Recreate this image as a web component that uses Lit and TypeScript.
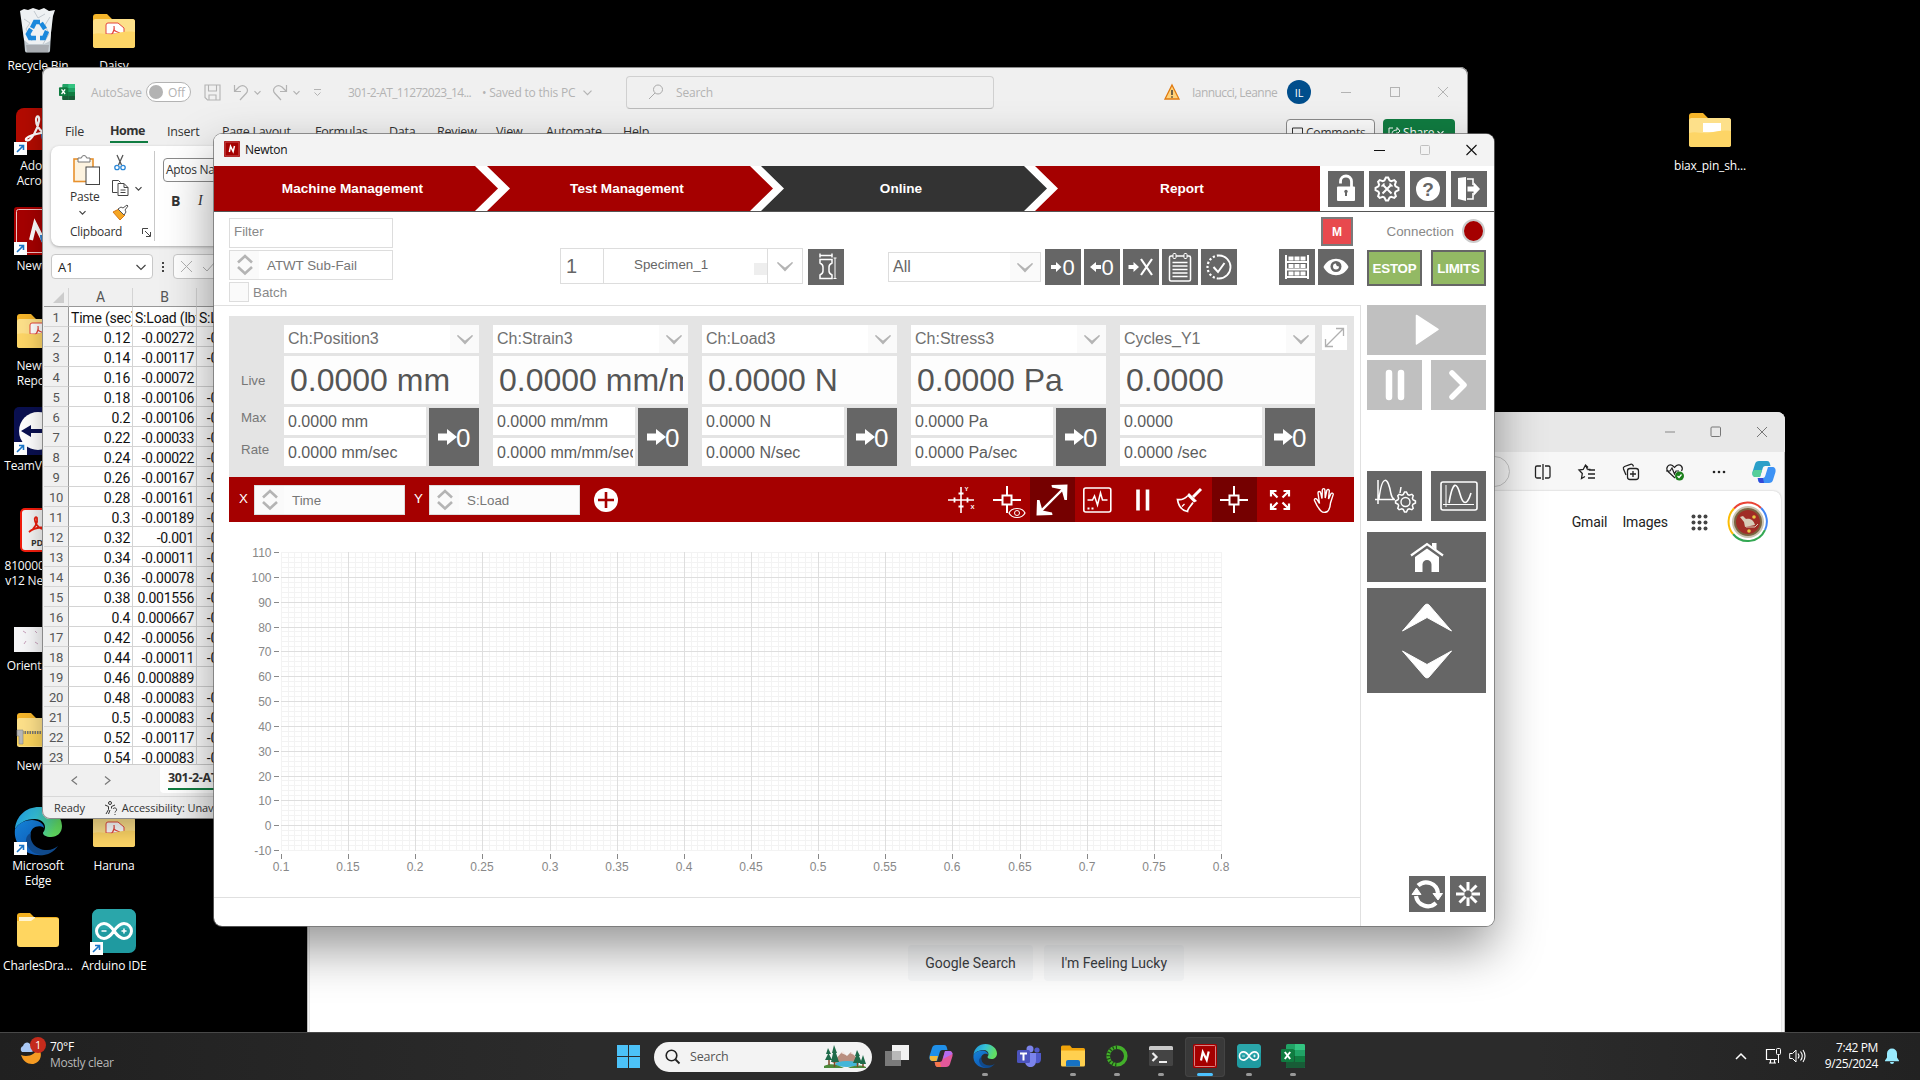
import { LitElement, html, css, svg } from "lit";
import { customElement } from "lit/decorators.js";

/* ---------- shared helpers ---------- */

const ic = (w: number, h: number, body: unknown, box = `0 0 ${w} ${h}`) =>
  html`<svg class="ic" width=${w} height=${h} viewBox=${box} fill="none">${body}</svg>`;

const range = (n: number) => Array.from({ length: n }, (_, i) => i);

const base = css`
  * { box-sizing: border-box; }
  :host { display: block; font-family: "Open Sans", "Noto Sans", sans-serif; font-size: 12px; letter-spacing: -0.2px; }
  .ic { display: block; flex: none; overflow: visible; }
`;

/* ---------- multi-use artwork ---------- */

const excelArt = svg`
  <rect x="5" y="0" width="19" height="24" rx="1.5" fill="#21a366"/>
  <path d="M14 0h8.5a1.5 1.5 0 0 1 1.500 1.500V6H14z" fill="#33c481"/>
  <path d="M5 6h9v6H5z" fill="#107c41"/><path d="M14 12h10v6H14z" fill="#107c41"/>
  <path d="M5 12h9v12H6.500A1.500 1.500 0 0 1 5 22.500z" fill="#185c37"/><path d="M14 18h10v4.500a1.500 1.500 0 0 1-1.500 1.500H14z" fill="#185c37"/>
  <rect x="0" y="5" width="13" height="13" rx="1.2" fill="#107c41"/>
  <path d="M3.800 8l5.400 7M9.200 8l-5.400 7" stroke="#fff" stroke-width="2"/>`;

const newtonArt = svg`
  <rect width="24" height="24" rx="1.500" fill="#a50000"/>
  <rect x="1.500" y="1.500" width="21" height="21" rx="1" stroke="#d98080" stroke-width="1"/>
  <path d="M8 16.500L9.800 8L13.700 16L15.700 7.500" stroke="#fff" stroke-width="2.200"/>`;

const edgeArt = svg`
  <defs>
    <linearGradient id="eg1" x1="0" y1="0" x2="1" y2="0.300"><stop offset="0" stop-color="#1b8fd8"/><stop offset="0.500" stop-color="#35c1d8"/><stop offset="1" stop-color="#62de62"/></linearGradient>
    <linearGradient id="eg2" x1="0" y1="0" x2="0.500" y2="1"><stop offset="0" stop-color="#1583d8"/><stop offset="1" stop-color="#0f5cb8"/></linearGradient>
  </defs>
  <path d="M1 22C2 9 12 0 25 0c13 0 23 9 23 19c0 7-5 11-11 11c-5 0-8-2-8-4c0-1 2-2 2-6c0-4-4-8-10-8C11 12 4 17 1 22z" fill="url(#eg1)"/>
  <path d="M1 22c4-6 10-9 17-9c7 0 12 4 12 8c-3-3-14-3-14 9c0 10 8 16 14 18C12 50-1 38 1 22z" fill="url(#eg2)"/>
  <path d="M17 26c-2 9 5 17 16 17c5 0 8-2 11-4c-5 7-12 9.500-17 9c-9-1-15-8-15-15c0-3 2-6 5-7z" fill="#104a8c"/>`;

const folderArt = svg`
  <path d="M0 3a3 3 0 0 1 3-3h11l5 5h20a3 3 0 0 1 3 3v8H0z" fill="#f5b52a"/>
  <rect x="0" y="5" width="42" height="29" rx="2.500" fill="#fde08a"/>`;
const plainFolder = svg`
  <path d="M0 3a3 3 0 0 1 3-3h10l4 4h22a3 3 0 0 1 3 3v8H0z" fill="#f2b01f"/>
  <rect x="2" y="4" width="16" height="4" fill="#fff4cf"/>
  <path d="M0 8h14l4-3h22a2 2 0 0 1 2 2v24a3 3 0 0 1-3 3H3a3 3 0 0 1-3-3z" fill="#ffd660"/>`;
const pdfFolder = svg`${folderArt}
  <path d="M13 20V11a2 2 0 0 1 2-2h10l6 5v6z" fill="#fff" stroke="#e4463c"/>
  <path d="M21 12c1 5-1 7-3 9M21 16c2 2 4 2 6 3" stroke="#e4463c" stroke-width="1.200"/>
  <path d="M0 20c8-2 12 1 20 0c8-2 14-3 22-2v13a3 3 0 0 1-3 3H3a3 3 0 0 1-3-3z" fill="#fdd566"/>`;
const zipFolder = svg`${folderArt}
  <path d="M0 18h42v13a2 2 0 0 1-2 2H3a3 3 0 0 1-3-3z" fill="#fbd35c"/>
  <path d="M0 19.500h42" stroke="#777" stroke-width="3" stroke-dasharray="1.500 1"/>
  <path d="M0 17h6v14H2v-8H0z" fill="#b9b9b9" stroke="#888" stroke-width=".6"/>`;

const arduinoArt = svg`
  <rect width="44" height="44" rx="7" fill="#1f9aa0"/><rect width="44" height="20" rx="7" fill="#2aa6aa"/>
  <path d="M22 22c-4-6-7-7.500-10-7.500a7.500 7.500 0 0 0 0 15c3 0 6-2 10-7.500c4-6 7-7.500 10-7.500a7.500 7.500 0 0 1 0 15c-3 0-6-2-10-7.500z" stroke="#fff" stroke-width="3"/>
  <path d="M9.500 22h5M29.500 22h5M32 19.500v5" stroke="#fff" stroke-width="1.500"/>`;

const copilotArt = svg`
  <path d="M7 1h8c2 0 2.500 1 3 3l.5 2h-5c-2 0-2.500 1-3 3L8 17H4c-3 0-4-2-3.500-5L3 4C3.500 2 5 1 7 1z" fill="#1f8fe8"/>
  <path d="M17 23H9c-2 0-2.500-1-3-3l-.5-2h5c2 0 2.500-1 3-3L16 7h4c3 0 4 2 3.500 5L21 20c-.5 2-2 3-4 3z" fill="#e2589a"/>`;

/* ---------- desktop ---------- */

const shortcut = svg`<rect x="0" y="35" width="13" height="13" fill="#fff"/><path d="M3 45l6-6M5 38.500h4.500V43" stroke="#1a75c8" stroke-width="1.600"/>`;

@customElement("desk-icons")
class DeskIcons extends LitElement {
  static styles = [base, css`
    .item { position: absolute; width: 80px; display: flex; flex-direction: column; align-items: center; color: #fff; text-align: center; line-height: 15px; white-space: nowrap; letter-spacing: -0.15px; }
    .art { width: 48px; height: 48px; margin-bottom: 3px; }
    .c1 { left: -2px; } .c2 { left: 74px; } .c3 { left: 1670px; }
    .r0 { top: 7px; } .r1 { top: 107px; } .r2 { top: 207px; } .r3 { top: 307px; } .r4 { top: 407px; } .r5 { top: 507px; }
    .r6 { top: 607px; } .r7 { top: 707px; } .r8 { top: 807px; } .r9 { top: 907px; }
  `];
  item(cls: string, art: unknown, ...lines: string[]) {
    return html`<div class="item ${cls}"><div class="art">${ic(48, 48, art)}</div>${lines.map((l) => html`<div>${l}</div>`)}</div>`;
  }
  render() {
    const at = (x: number, y: number, a: unknown) => svg`<g transform="translate(${x} ${y})">${a}</g>`;
    return html`
      ${this.item("c1 r0", svg`
        <path d="M8 7L38 7L36 44a2 2 0 0 1-2 1.500H13a2 2 0 0 1-2-1.500z" fill="#c3ccd2"/>
        <path d="M6 4l4-2l4 1l5-2l6 2l5-2l5 3l6-1l-2 6l-3 25l-6 3H15l-5-4z" fill="#eef1f3"/>
        <path d="M10 12l6 4l-4 6l6 12M36 10l-5 8l4 9l-6 10M20 4l4 7l7-4" stroke="#c2c9cf" stroke-width="1"/>
        <path d="M12 38h23l-1 7H13z" fill="#a9adb2"/>
        <path d="M18 21l3-6h5M27 16l4 6M33 24l-3 7h-4M22 31h-6l-2-4l3-5" stroke="#1a88dc" stroke-width="4.500"/>`, "Recycle Bin")}
      ${this.item("c2 r0", at(3, 7, pdfFolder), "Daisy")}
      ${this.item("c1 r1", svg`<rect x="2" y="1" width="44" height="42" rx="8" fill="#b30b00"/>
        <path d="M12 33c-2-4 22-10 24-6c1 4-14-3-14-14c0-5 4-5 3 1c-1 7-8 22-13 19z" stroke="#fff" stroke-width="2.200"/>
        <path d="M27 27h8v12c-5-2-8-5-8-12z" fill="#2b7fd0"/>${shortcut}`, "Adobe", "Acrobat")}
      ${this.item("c1 r2", svg`<rect width="48" height="48" rx="3" fill="#a50000"/><rect x="2.500" y="2.500" width="43" height="43" rx="2" stroke="#f0c4c4"/>
        <path d="M17 33L21 17L29 33L33 17" stroke="#fff" stroke-width="4"/><path d="M26 28h8v12c-5-2-8-5-8-12z" fill="#2b7fd0"/>${shortcut}`, "Newton")}
      ${this.item("c1 r3", at(3, 7, pdfFolder), "Newton", "Reports")}
      ${this.item("c1 r4", svg`<rect width="48" height="48" rx="5" fill="#0a1050"/><circle cx="24" cy="24" r="19" fill="#fff"/>
        <path d="M7 24l10-6v4h14v-4l10 6l-10 6v-4H17v4z" fill="#0a1050"/>${shortcut}`, "TeamViewer")}
      ${this.item("c1 r5", svg`<rect x="7" y="2" width="36" height="42" rx="4" fill="#f4f4f4" stroke="#f21d0d" stroke-width="2"/>
        <path d="M15 25c6-3 9-10 8-14c-1-2-3 0-2 3c1 5 6 9 10 8c3-2-9-3-16 3z" stroke="#e81c0c" stroke-width="1.800"/>
        <text x="17" y="39" font-size="9" font-weight="700" fill="#333" font-family="Open Sans, sans-serif">PDF</text>`, "8100000008", "v12 Newton")}
      ${this.item("c1 r6", svg`<rect x="0" y="20" width="48" height="25" fill="#f6f6f8"/><path d="M9 24l3 2m9-2l2 2M12 34l-2 3M21 35l3 2" stroke="#c9a3bd"/>`, "Orientation")}
      ${this.item("c1 r7", at(3, 6, zipFolder), "Newton")}
      ${this.item("c1 r8", svg`${edgeArt}${shortcut}`, "Microsoft", "Edge")}
      ${this.item("c2 r8", at(3, 6, pdfFolder), "Haruna")}
      ${this.item("c1 r9", at(3, 6, plainFolder), "CharlesDra...")}
      ${this.item("c2 r9", svg`${at(2, 2, arduinoArt)}${shortcut}`, "Arduino IDE")}
      ${this.item("c3 r1", at(3, 6, svg`${folderArt}<rect x="14" y="10" width="18" height="9" fill="#fff"/><path d="M0 20c8-2 12 1 20 0c8-2 14-3 22-2v13a3 3 0 0 1-3 3H3a3 3 0 0 1-3-3z" fill="#fdd566"/>`), "biax_pin_sh...")}
    `;
  }
}

/* ---------- browser window ---------- */

@customElement("browser-window")
class BrowserWindow extends LitElement {
  static styles = [base, css`
    .win { width: 1478px; height: 640px; border-radius: 8px 8px 0 0; background: #f7f7f7; display: flex; flex-direction: column; overflow: hidden; box-shadow: inset 0 0 0 1px #bdbdbd; }
    .title { height: 40px; background: #e8e8e8; display: flex; justify-content: flex-end; align-items: center; gap: 34px; padding-right: 17px; }
    .tools { height: 39px; display: flex; justify-content: flex-end; align-items: center; padding-right: 9px; }
    .tools .ic { margin-left: 22px; }
    .pill { width: 200px; height: 31px; border: 1px solid #c8c8c8; border-radius: 16px; display: flex; align-items: center; justify-content: flex-end; padding-right: 15px; }
    .page { flex: 1; margin: 0 4px 0 3px; background: #fff; border-radius: 8px 8px 0 0; box-shadow: 0 0 2px #bbb; }
    .top { display: flex; justify-content: flex-end; align-items: center; height: 62px; padding-right: 13px; font: 14px Roboto, sans-serif; letter-spacing: -0.1px; color: #222; }
    .top span { margin-right: 15px; }
    .top .dots { margin: 0 20px 0 8px; }
    .btns { display: flex; gap: 11px; margin: 392px 0 0 598px; }
    .btn { height: 36px; border-radius: 4px; background: #f8f9fa; color: #3c4043; display: grid; place-items: center; font: 14px Roboto, sans-serif; letter-spacing: 0; }
    .a { width: 125px; } .b { width: 140px; }
  `];
  render() {
    return html`<div class="win">
      <div class="title">
        ${ic(12, 12, svg`<path d="M1 6h10" stroke="#888"/>`)}
        ${ic(12, 12, svg`<rect x="1" y="1" width="9.500" height="9.500" rx="1" stroke="#777"/>`)}
        ${ic(12, 12, svg`<path d="M1 1l10 10M11 1L1 11" stroke="#777"/>`)}
      </div>
      <div class="tools">
        <div class="pill">${ic(14, 14, svg`<path d="M7 1l2 4l4 .6l-3 3l.7 4.400L7 11l-3.700 2l.7-4.400l-3-3l4-.6z" stroke="#777"/>`)}</div>
        ${ic(22, 20, svg`<path d="M9 4H5a1.500 1.500 0 0 0-1.500 1.500v9A1.500 1.500 0 0 0 5 16h4M13 4h3.500A1.500 1.500 0 0 1 18 5.500v9a1.500 1.500 0 0 1-1.500 1.500H13M11 2v16" stroke="#222" stroke-width="1.300"/>`)}
        ${ic(22, 20, svg`<path d="M12 5.500L9.500 3L7.200 7.500L3 8l3.300 3.500L5.500 16.500L9 14.500M9.500 3l2 4.500M13 8h6M12 12h7M12 16h7M11.500 7.500h3" stroke="#222" stroke-width="1.300"/>`)}
        ${ic(22, 20, svg`<path d="M6 13l-2.500-6A2 2 0 0 1 4.500 4.500l6-2.200a2 2 0 0 1 2.500 1l.5 1.200" stroke="#222" stroke-width="1.300"/><rect x="7.500" y="6.500" width="11" height="11" rx="2.500" stroke="#222" stroke-width="1.300"/><path d="M13 9v6M10 12h6" stroke="#222" stroke-width="1.300"/>`)}
        ${ic(22, 20, svg`<path d="M11 16L4 9.500C1 6 4.500 1.500 8.500 3.500L10.500 5.500L12.500 3.500C16 1.500 20 5 17.500 9M2 9h4l2-3l2.500 6l1.500-3h3" stroke="#222" stroke-width="1.200"/><circle cx="15.500" cy="14" r="4.500" fill="#1b7f1b"/><path d="M13.500 14l1.500 1.500l2.500-3" stroke="#fff" stroke-width="1.200"/>`)}
        ${ic(22, 20, svg`<circle cx="6" cy="10" r="1.300" fill="#222"/><circle cx="11" cy="10" r="1.300" fill="#222"/><circle cx="16" cy="10" r="1.300" fill="#222"/>`)}
        ${ic(24, 24, svg`<path d="M7 1h8c2 0 2.500 1 3 3l.5 2h-5c-2 0-2.500 1-3 3L8 17H4c-3 0-4-2-3.500-5L3 4C3.500 2 5 1 7 1z" fill="#2a9fc8"/><path d="M2 10l8 0l-2 7H4c-3 0-4-2-3.500-5z" fill="#55cf9a"/><path d="M17 23H9c-2 0-2.500-1-3-3l-.5-2h5c2 0 2.500-1 3-3L16 7h4c3 0 4 2 3.500 5L21 20c-.5 2-2 3-4 3z" fill="#3d92f5"/><path d="M6 18h5l1 5H9c-2 0-3-2-3-5z" fill="#3348d8"/>`)}
      </div>
      <div class="page">
        <div class="top"><span>Gmail</span><span>Images</span>
          <div class="dots">${ic(17, 17, range(9).map((i) => svg`<circle cx=${2.5 + (i % 3) * 6} cy=${2.5 + Math.floor(i / 3) * 6} r="2" fill="#444"/>`))}</div>
          ${ic(40, 40, svg`
            <path d="M6 6.500A19 19 0 0 1 33 6" stroke="#ea4335" stroke-width="2"/><path d="M33 6A19 19 0 0 1 37 28" stroke="#4285f4" stroke-width="2"/>
            <path d="M37 28A19 19 0 0 1 5 32" stroke="#34a853" stroke-width="2"/><path d="M5 32A19 19 0 0 1 6 6.500" stroke="#fbbc05" stroke-width="2"/>
            <circle cx="20" cy="20" r="16" fill="#c9c2b0"/><circle cx="20" cy="20" r="14" fill="#7a6540"/><circle cx="20" cy="20" r="12" fill="#a02c26"/>
            <path d="M12 15l3-1l3 3c5-1 8 2 9 6l-10 2l-1-5z" fill="#d8cbb8"/><path d="M18 25h9l3-3" stroke="#d8cbb8"/><circle cx="26" cy="15" r="1.800" fill="#e8c840"/><circle cx="21" cy="29" r="1.800" fill="#e8c840"/>`)}
        </div>
        <div class="btns"><div class="btn a">Google Search</div><div class="btn b">I'm Feeling Lucky</div></div>
      </div>
    </div>`;
  }
}

/* ---------- spreadsheet window ---------- */

const ROWS: [string, string, string][] = [
  ["Time (sec)", "S:Load (lbf)", "S:Load"],
  ["0.12", "-0.00272", "-0"], ["0.14", "-0.00117", "-0"], ["0.16", "-0.00072", ""], ["0.18", "-0.00106", "-0"],
  ["0.2", "-0.00106", "-0"], ["0.22", "-0.00033", "-0"], ["0.24", "-0.00022", "-0"], ["0.26", "-0.00167", "-0"],
  ["0.28", "-0.00161", "-0"], ["0.3", "-0.00189", "-0"], ["0.32", "-0.001", "-0"], ["0.34", "-0.00011", "-0"],
  ["0.36", "-0.00078", "-0"], ["0.38", "0.001556", "-0"], ["0.4", "0.000667", "-0"], ["0.42", "-0.00056", "-0"],
  ["0.44", "-0.00011", "-0"], ["0.46", "0.000889", ""], ["0.48", "-0.00083", "-0"], ["0.5", "-0.00083", "-0"],
  ["0.52", "-0.00117", "-0"], ["0.54", "-0.00083", "-0"],
];

@customElement("sheet-window")
class SheetWindow extends LitElement {
  static styles = [base, css`
    .win { width: 1426px; height: 752px; padding-left: 1px; border-radius: 8px; background: #f0f0f0; overflow: hidden; display: flex; flex-direction: column; box-shadow: inset 0 0 0 1px #8a8a8a; }
    .title { height: 50px; flex: none; display: grid; align-items: center; padding-left: 16px; color: #b3b3b3; white-space: nowrap;
      grid-template-columns: 32px 55px 58px 29px 21px 18px 21px 20px 35px 134px 101px 43px 538px 28px 95px 54px 49px 48px 30px; }
    .fname { letter-spacing: -0.65px; } .who { letter-spacing: -0.55px; }
    .toggle { width: 45px; height: 20px; border: 1px solid #b3b3b3; border-radius: 10px; background: #fff; display: flex; align-items: center; gap: 5px; padding-left: 2px; }
    .knob { width: 14px; height: 14px; border-radius: 50%; background: #b3b3b3; }
    .search { width: 368px; height: 33px; border: 1px solid #d0d0d0; border-bottom-color: #bbb; border-radius: 4px; display: flex; align-items: center; gap: 12px; padding-left: 21px; }
    .avatar { width: 24px; height: 24px; border-radius: 50%; background: #004e8c; color: #fff; display: grid; place-items: center; font-size: 11px; }
    .menu { height: 29px; flex: none; display: grid; align-items: center; padding: 0 0 1px 22px; color: #333; font-size: 12.5px; white-space: nowrap;
      grid-template-columns: 45px 57px 55px 93px 74px 48px 59px 50px 77px 663px 97px 80px; }
    .home { font-weight: 700; border-bottom: 2px solid #107c41; width: 38px; height: 22px; line-height: 20px; margin-top: 2px; letter-spacing: -0.5px; }
    .cm { width: 89px; height: 26px; margin-top: 2px; border: 1px solid #8a8a8a; border-radius: 4px; display: flex; align-items: center; gap: 3px; padding-left: 5px; background: #fafafa; font-size: 12px; }
    .sh { width: 72px; height: 26px; margin-top: 2px; border-radius: 4px; display: flex; align-items: center; gap: 3px; padding-left: 5px; background: #107c41; color: #fff; font-size: 12px; }
    .ribbon { margin: 0 8px; height: 100px; flex: none; border-radius: 8px; background: #fff; box-shadow: 0 1px 3px #aaa; display: flex; padding: 5px 0 0 19px; color: #333; }
    .clip { width: 84px; display: grid; grid-template-columns: 42px 42px; align-content: start; }
    .paste { display: flex; flex-direction: column; gap: 4px; padding-top: 4px; line-height: 16px; align-items: flex-start; }
    .paste .cv { margin-left: 9px; }
    .col { display: flex; flex-direction: column; gap: 9px; padding-top: 4px; }
    .cr { display: flex; align-items: center; gap: 6px; height: 16px; }
    .cap { grid-column: 1 / 3; display: flex; gap: 20px; align-items: center; line-height: 18px; margin-top: 2px; letter-spacing: -0.25px; }
    .font { border-left: 1px solid #c8c8c8; height: 90px; padding: 7px 0 0 8px; flex: 1; }
    .fbox { width: 150px; height: 24px; border: 1px solid #8a8a8a; border-radius: 4px; line-height: 22px; padding-left: 2px; letter-spacing: -0.3px; }
    .bi { display: flex; gap: 19px; padding: 10px 0 0 8px; font-size: 14px; line-height: 18px; }
    .bi b { width: 8px; } .bi i { font-family: "Liberation Serif", serif; }
    .fx { display: flex; gap: 8px; align-items: center; height: 25px; margin: 8px 8px 0; flex: none; }
    .nb { width: 102px; height: 25px; border: 1px solid #c8c8c8; border-radius: 4px; background: #fff; display: flex; align-items: center; justify-content: space-between; padding: 0 6px; font-size: 13px; color: #222; }
    .fb { flex: 1; height: 25px; border: 1px solid #c8c8c8; border-radius: 4px; background: #fff; display: flex; align-items: center; gap: 9px; padding-left: 6px; }
    .grid { margin-top: 9px; height: 476px; overflow: hidden; flex: none; font-family: Roboto, "Liberation Sans", sans-serif; font-size: 14px; letter-spacing: -0.28px; color: #111; }
    .row { display: grid; grid-template-columns: 25px 64px 64px 64px 1fr; height: 20px; line-height: 20px; padding-left: 1px; }
    .row > div { overflow: hidden; white-space: nowrap; background: #fff; border-right: 1px solid #d4d4d4; border-bottom: 1px solid #d4d4d4; text-align: right; padding: 1px 2px 0 0; }
    .row > .n { background: #f0f0f0; color: #555; border-right: 1px solid #999; text-align: center; font-size: 13px; padding-right: 0; }
    .row.first > div:not(.n) { text-align: left; padding-left: 2px; padding-right: 0; letter-spacing: -0.2px; }
    .row > .c { padding-right: 42px; }
    .row.head { height: 19px; line-height: 16px; color: #555; }
    .row.head > div { background: #f0f0f0; text-align: center; border-bottom-color: #999; padding-right: 0; }
    .row.head > .n { border-right-color: #d4d4d4; display: flex; justify-content: flex-end; align-items: flex-end; padding: 0 4px 3px 0; }
    .tabs { height: 32px; flex: none; display: flex; padding-left: 26px; border-top: 1px solid #ccc; align-items: center; gap: 22px; }
    .tab { margin-left: 25px; height: 28px; align-self: flex-start; background: #fff; border-radius: 0 0 4px 4px; padding: 2px 8px 0; font-weight: 700; color: #333; font-size: 12.5px; letter-spacing: -0.35px; white-space: nowrap; }
    .tab span { display: block; border-bottom: 2px solid #107c41; line-height: 21px; }
    .status { flex: 1; display: flex; gap: 19px; padding: 0 0 1px 11px; align-items: center; border-top: 1px solid #d8d8d8; color: #333; font-size: 11px; letter-spacing: -0.1px; }
    .acc { display: flex; align-items: center; gap: 4px; }
  `];
  render() {
    const g = "#b3b3b3";
    const cv = (c: string, w = 7) => ic(w, w, svg`<path d="M${0.5} ${w * 0.3}L${w / 2} ${w * 0.75}L${w - 0.5} ${w * 0.3}" stroke=${c} stroke-width="1.200"/>`);
    return html`<div class="win">
      <div class="title">
        ${ic(16, 16, excelArt, "0 0 24 24")}<span>AutoSave</span>
        <div class="toggle"><div class="knob"></div>Off</div>
        ${ic(17, 17, svg`<path d="M1 1h15v15H3.500L1 13.500zM4.500 1v6h8V1M5 16v-5h7v5" stroke=${g} stroke-width="1.100"/>`)}
        ${ic(16, 17, svg`<path d="M1.500 1v6.500H8M1.500 7.500L6 3c5-4 11 2 7 6.500L7 16" stroke=${g} stroke-width="1.200"/>`)}${cv(g)}
        ${ic(16, 17, svg`<path d="M14.500 1v6.500H8M14.500 7.500L10 3C5-1-1 5 3 9.500L9 16" stroke=${g} stroke-width="1.200"/>`)}${cv(g)}
        ${ic(9, 9, svg`<path d="M1 1.500h7M1.500 4.500l3 3l3-3" stroke=${g}/>`)}
        <span class="fname">301-2-AT_11272023_14...</span><span>• Saved to this PC</span>${cv(g, 9)}
        <div class="search">${ic(16, 16, svg`<circle cx="10" cy="5.500" r="4.500" stroke="#aaa"/><path d="M7 9L1 15" stroke="#aaa"/>`)}Search</div>
        ${ic(16, 16, svg`<path d="M8 1L15 15H1z" fill="#ffd27a" stroke="#e07a10" stroke-width="1.300"/><path d="M8 6v5M8 12.300v1.400" stroke="#333" stroke-width="1.400"/>`)}
        <span class="who">Iannucci, Leanne</span><div class="avatar">IL</div>
        ${ic(11, 11, svg`<path d="M0 5.500h10" stroke=${g}/>`)}${ic(11, 11, svg`<rect x=".5" y=".5" width="9" height="9" stroke=${g}/>`)}${ic(11, 11, svg`<path d="M0 0l10 10M10 0L0 10" stroke=${g}/>`)}
      </div>
      <div class="menu"><span>File</span><span class="home">Home</span><span>Insert</span><span>Page Layout</span><span>Formulas</span><span>Data</span><span>Review</span><span>View</span><span>Automate</span><span>Help</span>
        <div class="cm">${ic(11, 11, svg`<path d="M.5 1h10v7H5L3 10.500V8H.5z" stroke="#333"/>`)}Comments</div>
        <div class="sh">${ic(12, 12, svg`<path d="M5 2H1v9h9V8M4 8c0-3 2-4 5-4V1.500l3 3.500l-3 3V6" stroke="#fff"/>`)}Share ${cv("#fff")}</div>
      </div>
      <div class="ribbon">
        <div class="clip">
          <div class="paste">
            ${ic(30, 30, svg`<rect x="4" y="4" width="19" height="22.500" fill="#fdf3e0" stroke="#e8912d" stroke-width="1.600"/><path d="M8 7V3h3.500a2.500 2.500 0 0 1 5 0H20v4z" fill="#fff" stroke="#777"/><rect x="16" y="12" width="13.500" height="17.500" fill="#fff" stroke="#444"/>`)}
            <span>Paste</span><span class="cv">${cv("#444")}</span>
          </div>
          <div class="col">
            <div class="cr">${ic(16, 16, svg`<path d="M5 0l4.500 10M11 0L6.500 10" stroke="#555" stroke-width="1.300"/><circle cx="5" cy="12.500" r="2.200" stroke="#2b88d8" stroke-width="1.300"/><circle cx="11" cy="12.500" r="2.200" stroke="#2b88d8" stroke-width="1.300"/>`)}</div>
            <div class="cr">${ic(17, 16, svg`<path d="M5.500 12.500H.5V.5h6l2 2" stroke="#444"/><path d="M6 3.500h6l4 4v8H6z M12 3.500v4h4M8.500 10h5M8.500 12.500h5" stroke="#444"/>`)}${cv("#444")}</div>
            <div class="cr">${ic(16, 16, svg`<path d="M1 7l6-3l6 6l-5 5z" fill="#f5a623" stroke="#d87816"/><path d="M6 4l3-2l2 1l4-3l1 1l-3 4l1 2l-2 3z" fill="#fff" stroke="#555"/>`)}</div>
          </div>
          <div class="cap">Clipboard ${ic(9, 9, svg`<path d="M.5 6V.5H6M3 3l5 5M8.500 4v4.500H4" stroke="#444"/>`)}</div>
        </div>
        <div class="font"><div class="fbox">Aptos Narrow</div><div class="bi"><b>B</b><i>I</i></div></div>
      </div>
      <div class="fx"><div class="nb">A1 ${cv("#444", 10)}</div>
        ${ic(4, 12, svg`<path d="M2 1v2M2 5v2M2 9v2" stroke="#444" stroke-width="2"/>`)}
        <div class="fb">${ic(13, 13, svg`<path d="M1 1l11 11M12 1L1 12" stroke=${g}/>`)}${ic(14, 12, svg`<path d="M1 6l4 4l8-9" stroke=${g}/>`)}</div></div>
      <div class="grid">
        <div class="row head"><div class="n">${ic(11, 11, svg`<path d="M11 0v11H0z" fill="#ccc"/>`)}</div><div>A</div><div>B</div><div>C</div><div></div></div>
        ${ROWS.map((r, i) => html`<div class="row ${i ? "" : "first"}"><div class="n">${i + 1}</div><div>${r[0]}</div><div>${r[1]}</div><div class="c">${r[2]}</div><div></div></div>`)}
      </div>
      <div class="tabs">${ic(11, 11, svg`<path d="M8 1.500L3 5.500L8 9.500" stroke="#777" stroke-width="1.200"/>`)}${ic(11, 11, svg`<path d="M3 1.500L8 5.500L3 9.500" stroke="#777" stroke-width="1.200"/>`)}
        <div class="tab"><span>301-2-AT_112720</span></div></div>
      <div class="status">Ready<div class="acc">${ic(14, 14, svg`<circle cx="6" cy="2" r="1.500" stroke="#333"/><path d="M1 4l3.500 1.500v3L2 13M11 4L7.500 5.500v2M6 9l-1.500 4M9 8c1-2 4-1 3.500 1c0 1-1.500 1.500-1.500 2.500M11 13v1" stroke="#333"/>`)}Accessibility: Unavailable</div></div>
    </div>`;
  }
}

/* ---------- Newton window ---------- */

const CHANNELS = [
  { name: "Ch:Position3", live: "0.0000 mm", max: "0.0000 mm", rate: "0.0000 mm/sec" },
  { name: "Ch:Strain3", live: "0.0000 mm/mm", max: "0.0000 mm/mm", rate: "0.0000 mm/mm/sec" },
  { name: "Ch:Load3", live: "0.0000 N", max: "0.0000 N", rate: "0.0000 N/sec" },
  { name: "Ch:Stress3", live: "0.0000 Pa", max: "0.0000 Pa", rate: "0.0000 Pa/sec" },
  { name: "Cycles_Y1", live: "0.0000", max: "0.0000", rate: "0.0000 /sec" },
];

const W = "#fff";
const F = "Liberation Sans, Arial, sans-serif";
const gearPath = (cx: number, cy: number, r: number, teeth: number) => {
  let d = "";
  const n = teeth * 4;
  for (let i = 0; i < n; i++) {
    const a = ((i - 0.5) / n) * Math.PI * 2;
    const rr = i % 4 < 2 ? r : r * 0.78;
    d += `${i ? "L" : "M"}${(cx + rr * Math.cos(a)).toFixed(2)} ${(cy + rr * Math.sin(a)).toFixed(2)}`;
  }
  return d + "z";
};

const N = {
  lock: svg`<path d="M12.500 12.500V10.500a5.500 5.500 0 0 1 11 0V16" stroke=${W} stroke-width="2.800"/><rect x="9" y="15.500" width="18" height="14.500" rx="1" fill=${W}/><path d="M18 20.500v4.500" stroke="#666" stroke-width="2"/><circle cx="18" cy="20.500" r="1.700" fill="#666"/>`,
  gear: svg`<path d=${gearPath(18, 18, 11.5, 8)} stroke=${W} stroke-width="2"/><path d="M14 14l8.500 8.500M22 14l-8.500 8.500" stroke=${W} stroke-width="2"/><path d="M12.500 15.500l3-3M20.500 12.500l3 3" stroke=${W} stroke-width="1.500"/>`,
  help: svg`<circle cx="18" cy="18" r="12" fill=${W}/><text x="18" y="24.500" font-size="19" font-weight="700" fill="#666" text-anchor="middle" font-family=${F}>?</text>`,
  exit: svg`<path d="M7 7l8-1v24l-8-2z" fill=${W}/><path d="M16 8h6v6M22 22v6h-6" stroke=${W} stroke-width="1.600"/><path d="M16.500 15.500h6V11l6.500 7l-6.500 7v-4.500h-6z" fill=${W}/>`,
  specimen: svg`<path d="M12 6.500h12M12 4.500v4M24 4.500v4M12 10.500h12v3.500c-2 1-3 2-3 4v4c0 2 1 3 3 4v3.500H12v-3.500c2-1 3-2 3-4v-4c0-2-1-3-3-4z" stroke=${W} stroke-width="1.500"/><path d="M27 9v20M25.500 9h3M25.500 29.500h3" stroke=${W}/>`,
  to0: svg`<path d="M6 16h5v-3l5.500 5l-5.500 5v-3H6z" fill=${W}/><text x="17.500" y="26" font-size="22" fill=${W} font-family=${F}>0</text>`,
  from0: svg`<path d="M17 16h-5v-3l-6 5l6 5v-3h5z" fill=${W}/><text x="17.500" y="26" font-size="22" fill=${W} font-family=${F}>0</text>`,
  toX: svg`<path d="M5.500 16h5v-3l5.500 5l-5.500 5v-3h-5z" fill=${W}/><path d="M18 10l11 16M29 10L18 26" stroke=${W} stroke-width="2.200"/>`,
  list: svg`<rect x="7.500" y="7" width="21" height="25" rx="1.500" stroke=${W} stroke-width="1.500"/><path d="M10.500 13.500h15M10.500 17h15M10.500 20.500h15M10.500 24h15M10.500 27.500h15" stroke=${W} stroke-width="1.600"/><rect x="11" y="4.500" width="3" height="5" rx="1" fill="#666" stroke=${W}/><rect x="22" y="4.500" width="3" height="5" rx="1" fill="#666" stroke=${W}/>`,
  check: svg`<path d="M18 6.500a11.500 11.500 0 0 1 0 23" stroke=${W} stroke-width="1.800"/><path d="M18 6.500a11.500 11.500 0 0 0 0 23" stroke=${W} stroke-width="2.200" stroke-dasharray="2.200 2"/><path d="M12.500 18l4.500 5l6.500-9" stroke=${W} stroke-width="2"/>`,
  rack: svg`<path d="M7 6v24M29 6v24M6 13h24M6 20.500h24M6 28h24" stroke=${W} stroke-width="2"/><path d="M9.500 9.500h17M9.500 17h17M9.500 24.500h17" stroke=${W} stroke-width="4" stroke-dasharray="5 1"/>`,
  eye: svg`<path d="M5.500 18c5-11 20-11 25 0c-5 11-20 11-25 0z" fill=${W}/><circle cx="18" cy="17.500" r="5.500" fill="#666"/><path d="M18 14.500a3 3 0 1 0 3 3a3 3 0 0 1-3-3z" fill=${W}/>`,
};

@customElement("newton-window")
class NewtonWindow extends LitElement {
  static styles = [base, css`
    :host { font-family: "Liberation Sans", Arial, sans-serif; font-size: 13.33px; letter-spacing: 0; color: #777; }
    .win { width: 1280px; height: 792px; border-radius: 8px; background: #fff; overflow: hidden; display: flex; flex-direction: column; }
    .frame { border-radius: 8px; width: 1280px; box-shadow: 0 0 0 1px rgba(110,110,110,.75), 0 22px 50px rgba(0,0,0,.42); }
    .bar { height: 32px; flex: none; background: #f3f3f3; display: flex; align-items: center; padding: 0 17px 2px 10px; gap: 5px; font: 12px "Open Sans", sans-serif; letter-spacing: -0.25px; color: #111; }
    .bar .sp { flex: 1; } .ctl { display: flex; gap: 35px; }
    .nav { height: 46px; flex: none; display: flex; border-bottom: 1px solid #555; }
    .steps { width: 1106px; display: grid; grid-template-columns: 276px 274px 274px 282px; height: 45px; background: #fff; }
    .step { display: grid; place-items: center; background: #a50000; color: #fff; font-weight: 700; font-size: 13.6px; padding-bottom: 1px; }
    .step.s1 { clip-path: polygon(0 0, 261px 0, 284px 50%, 261px 100%, 0 100%); margin-right: -9px; padding-right: 8px; }
    .step.s2, .step.s3 { margin: 0 -11px 0 -3px; padding-right: 8px; clip-path: polygon(0 0, 263px 0, 286px 50%, 263px 100%, 0 100%, 23px 50%); }
    .step.s3 { background: #333; }
    .step.s4 { margin-left: -3px; clip-path: polygon(0 0, 100% 0, 100% 100%, 0 100%, 23px 50%); padding-left: 9px; }
    .nav .tiles { padding: 5px 0 0 8px; gap: 5px; }
    .tiles { display: flex; gap: 3px; }
    .t { width: 36px; height: 36px; background: #666; display: grid; place-items: center; flex: none; }
    .head { height: 94px; flex: none; display: flex; align-items: flex-start; padding-left: 15px; }
    .filters { width: 164px; padding-top: 6px; display: flex; flex-direction: column; gap: 2px; }
    .box { height: 30px; border: 1px solid #ddd; display: flex; align-items: center; background: #fff; }
    .fl { padding: 0 0 3px 4px; color: #888; }
    .sp30 { width: 29px; align-self: stretch; background: #fafafa; display: grid; place-items: center; margin-right: 8px; }
    .batch { display: flex; align-items: center; gap: 4px; color: #888; }
    .cb { width: 20px; height: 20px; border: 1px solid #ddd; background: #fafafa; }
    .spec { margin: 36px 0 0 167px; width: 243px; height: 36px; border: 1px solid #ddd; display: grid; grid-template-columns: 43px 164px 1fr; color: #666; }
    .spec > div { display: grid; align-items: center; }
    .one { border-right: 1px solid #ddd; font-size: 20px; padding-left: 5px; }
    .spec > .nm { border-right: 1px solid #ddd; display: flex; justify-content: space-between; padding: 0 0 3px 30px; }
    .nm i { width: 13px; height: 12px; background: #eee; margin-top: 9px; }
    .dd { place-items: center; }
    .m37 { margin-top: 37px; } .ml5 { margin-left: 5px; }
    .all { margin: 40px 4px 0 44px; width: 153px; height: 30px; border: 1px solid #ddd; display: flex; justify-content: space-between; font-size: 16px; align-items: center; padding-left: 4px; color: #666; }
    .dd30 { width: 30px; align-self: stretch; background: #fafafa; display: grid; place-items: center; }
    .right { margin-left: 42px; width: 75px; padding-top: 5px; display: flex; flex-direction: column; align-items: flex-end; gap: 3px; }
    .m { width: 32px; height: 29px; background: #e8494e; border: 2px solid #7a7a7a; color: #fff; font-weight: 700; font-size: 12px; display: grid; place-items: center; margin-right: 1px; }
    .conn { width: 119px; margin-left: 13px; padding-top: 7px; }
    .cl { display: flex; justify-content: flex-end; align-items: center; gap: 8px; color: #888; height: 24px; padding-right: 1px; }
    .dot { width: 23px; height: 24px; border-radius: 50%; background: #a50000; border: 2px solid #ccc; }
    .two { display: flex; justify-content: space-between; }
    .g { width: 55px; height: 36px; margin-top: 7px; background: #93b964; border: 2.500px solid #666; color: #fff; display: grid; place-items: center; font-size: 13.33px; font-weight: 700; letter-spacing: -0.2px; }
    .body { flex: 1; display: flex; min-height: 0; }
    .main { width: 1147px; flex: none; border-right: 1px solid #e0e0e0; border-top: 1px solid #e0e0e0; margin-top: -1px; padding: 10px 0 0 15px; display: flex; flex-direction: column; }
    .panel { width: 1125px; height: 161px; flex: none; background: #e4e4e4; padding: 9px 7px 0 12px; display: flex; }
    .labels { width: 43px; display: flex; flex-direction: column; padding-top: 46px; line-height: 20px; color: #777; }
    .labels span:nth-child(2) { margin: 17px 0 12px; }
    .ch { width: 195px; margin-right: 14px; color: #5c5c5c; font-size: 16px; }
    .ch:nth-of-type(6) { margin-right: 7px; }
    .sel { height: 28px; background: #fff; display: flex; justify-content: space-between; align-items: center; padding-left: 4px; color: #707070; line-height: 30px; }
    .sel .dd30 { width: 29px; }
    .live { height: 48px; margin: 3px 0; background: #fdfdfd; padding: 0 5px 0 6px; font-size: 32px; line-height: 49px; white-space: nowrap; color: #555; display: flex; }
    .live span { overflow: hidden; flex: 1; }
    .low { display: grid; grid-template-columns: 142px 50px; column-gap: 3px; }
    .vals { display: grid; gap: 3px; grid-template: 28px 28px / 142px; }
    .vals div { background: #fff; padding: 0 2px 0 4px; line-height: 30px; white-space: nowrap; display: flex; }
    .vals span { overflow: hidden; flex: 1; height: 28px; }
    .zero { background: #666; margin-top: 1px; height: 58px; }
    .exp { width: 25px; height: 25px; background: #fff; }
    .axis { width: 1125px; height: 45px; flex: none; background: #a50000; color: #fff; display: flex; align-items: center; padding-left: 10px; }
    .axis .lb { width: 15px; padding-bottom: 3px; }
    .axis .lb.y { margin-left: 9px; }
    .axis .box { width: 151px; background: #fcfcfc; color: #777; margin-bottom: -1px; }
    .plus { margin-left: 14px; flex: 1; }
    .tl { display: grid; grid-template-columns: repeat(9, 45.500px); padding-right: 6px; height: 45px; }
    .tl > div { display: grid; place-items: center; }
    .tl > .on { background: #750000; }
    .chart { height: 376px; flex: none; margin-left: -15px; border-bottom: 1px solid #e0e0e0; }
    .side { flex: 1; padding: 0 8px 0 6px; display: flex; flex-direction: column; margin-top: -1px; }
    .b1 { width: 119px; height: 50px; background: #c0c0c0; display: grid; place-items: center; flex: none; }
    .b2 { width: 55px; height: 50px; background: #c0c0c0; display: grid; place-items: center; flex: none; }
    .dk { background: #666; }
    .mt5 { margin-top: 5px; } .mt61 { margin-top: 61px; } .mt11 { margin-top: 11px; }
    .jog { margin-top: 6px; height: 105px; }
    .last { margin-top: 183px; justify-content: flex-end; gap: 5px; }
  `];

  updown() {
    return ic(18, 22, svg`<path d="M2 8.500L9 2L16 8.500M2 13L9 19.500L16 13" stroke="#b4b4b4" stroke-width="2.600"/>`);
  }
  down() {
    return ic(18, 12, svg`<path d="M1.500 2.500L9 8.500L16.500 2.500L9 10.500z" fill="#b4b4b4" stroke="#b4b4b4" stroke-width="1.300"/>`);
  }
  tile(a: unknown) {
    return html`<div class="t">${ic(36, 36, a)}</div>`;
  }
  chart() {
    const x0 = 67.5, x1 = 1007.5, y0 = 30.5, y1 = 328.5;
    const px = (i: number, n: number) => Math.floor(x0 + ((x1 - x0) * i) / n) + 0.5;
    const py = (i: number, n: number) => Math.floor(y0 + ((y1 - y0) * i) / n) + 0.5;
    return svg`
      ${range(141).map((i) => svg`<path d="M${px(i, 140)} 30V329" stroke="#f3f3f3"/>`)}
      ${range(61).map((i) => svg`<path d="M67 ${py(i, 60)}H1008" stroke="#f3f3f3"/>`)}
      ${range(13).map((i) => svg`<path d="M${px(i + 1, 14)} 30V329" stroke="#dedede"/>`)}
      ${range(11).map((i) => svg`<path d="M67 ${py(i + 1, 12)}H1008" stroke="#dedede"/>`)}
      <g font-family=${F} font-size="12" fill="#888">
        ${range(13).map((i) => svg`<path d="M60 ${py(i, 12)}h5" stroke="#888"/><text x="57.500" y=${py(i, 12) + 4} text-anchor="end">${110 - i * 10}</text>`)}
        ${range(15).map((i) => svg`<path d="M${px(i, 14)} 332v5" stroke="#888"/><text x=${px(i, 14) - 0.5} y="348.500" text-anchor="middle">${+(0.1 + i * 0.05).toFixed(2)}</text>`)}
      </g>`;
  }
  render() {
    return html`<div class="frame"><div class="win">
      <div class="bar">${ic(16, 16, newtonArt, "0 0 24 24")}<span>Newton</span><span class="sp"></span>
        <div class="ctl">${ic(11, 11, svg`<path d="M0 6.500h11" stroke="#111" stroke-width="1.200"/>`)}${ic(11, 11, svg`<rect x=".5" y="1.500" width="9" height="9" rx="1" stroke="#c0c0c0"/>`)}${ic(11, 11, svg`<path d="M.5 1l10 10M10.500 1l-10 10" stroke="#111" stroke-width="1.100"/>`)}</div></div>
      <div class="nav">
        <div class="steps"><div class="step s1">Machine Management</div><div class="step s2">Test Management</div><div class="step s3">Online</div><div class="step s4">Report</div></div>
        <div class="tiles">${this.tile(N.lock)}${this.tile(N.gear)}${this.tile(N.help)}${this.tile(N.exit)}</div>
      </div>
      <div class="head">
        <div class="filters">
          <div class="box fl">Filter</div>
          <div class="box"><div class="sp30">${this.updown()}</div>ATWT Sub-Fail</div>
          <div class="batch"><div class="cb"></div>Batch</div>
        </div>
        <div class="spec"><div class="one">1</div><div class="nm">Specimen_1<i></i></div><div class="dd">${this.down()}</div></div>
        <div class="m37 ml5">${this.tile(N.specimen)}</div>
        <div class="all">All<div class="dd30">${this.down()}</div></div>
        <div class="tiles m37">${this.tile(N.to0)}${this.tile(N.from0)}${this.tile(N.toX)}${this.tile(N.list)}${this.tile(N.check)}</div>
        <div class="right"><div class="m">M</div><div class="tiles">${this.tile(N.rack)}${this.tile(N.eye)}</div></div>
        <div class="conn"><div class="cl">Connection<div class="dot"></div></div>
          <div class="two"><div class="g">ESTOP</div><div class="g">LIMITS</div></div></div>
      </div>
      <div class="body">
        <div class="main">
          <div class="panel">
            <div class="labels"><span>Live</span><span>Max</span><span>Rate</span></div>
            ${CHANNELS.map((c) => html`<div class="ch">
              <div class="sel">${c.name}<div class="dd30">${this.down()}</div></div>
              <div class="live"><span>${c.live}</span></div>
              <div class="low"><div class="vals"><div><span>${c.max}</span></div><div><span>${c.rate}</span></div></div>
                <div class="zero">${ic(50, 58, svg`<path d="M9 25.500h9v-4.500l10 8l-10 8V32.500H9z" fill=${W}/><text x="27" y="38.500" font-size="26" fill=${W} font-family=${F}>0</text>`)}</div></div>
            </div>`)}
            <div class="exp">${ic(25, 25, svg`<path d="M4 21L21 4M14 3.500h7.500V11M3.500 14v7.500H11" stroke="#b0b0b0" stroke-width="1.300"/>`)}</div>
          </div>
          <div class="axis">
            <span class="lb">X</span><div class="box"><div class="sp30">${this.updown()}</div>Time</div>
            <span class="lb y">Y</span><div class="box"><div class="sp30">${this.updown()}</div>S:Load</div>
            <div class="plus">${ic(24, 24, svg`<circle cx="12" cy="12" r="12" fill=${W}/><path d="M12 4v16M4 12h16" stroke="#a50000" stroke-width="2.600"/>`)}</div>
            <div class="tl">
              <div>${ic(30, 30, svg`<path d="M15 2v26M2 15h26" stroke=${W} stroke-width="1.600"/><path d="M8.500 12.500v5M21.500 12.500v5M12.500 8.500h5M12.500 21.500h5" stroke=${W} stroke-width="1.800"/><text x="18.500" y="6" font-size="6" font-weight="700" fill=${W} font-family=${F}>Y</text><text x="24.500" y="24" font-size="6" font-weight="700" fill=${W} font-family=${F}>X</text>`)}</div>
              <div>${ic(30, 30, svg`<rect x="10.500" y="10.500" width="9" height="9" stroke=${W} stroke-width="2"/><path d="M15 1v9M15 20v8M1 15h9M20 15h9" stroke=${W} stroke-width="2"/><path d="M17 28c3-6 13-6 16 0c-3 6-13 6-16 0z" fill="#a50000" stroke=${W} stroke-width="1.200"/><circle cx="25" cy="28" r="2.500" stroke=${W}/>`)}</div>
              <div class="on">${ic(34, 34, svg`<path d="M4 30L30 4" stroke=${W} stroke-width="2.400"/><path d="M32.500 1.500L16.500 2L17 4.500L26.500 6.500L29.500 17L32 17zM1.500 32.500L2 17L4.500 17L7.500 27.500L17 29.500L17.500 32z" fill=${W}/>`)}</div>
              <div>${ic(30, 28, svg`<rect x=".8" y="2" width="27" height="24" rx="2" stroke=${W} stroke-width="1.600"/><path d="M4.500 14h5l2-4l3 9l3-12l2 7h5" stroke=${W} stroke-width="1.500"/><path d="M4.500 22.500h2M8.500 22.500h2" stroke=${W} stroke-width="1.800"/>`)}</div>
              <div>${ic(20, 24, svg`<path d="M5 1.500v21M14.500 1.500v21" stroke=${W} stroke-width="3.600"/>`)}</div>
              <div>${ic(26, 26, svg`<path d="M25 2l-8 8" stroke=${W} stroke-width="3"/><path d="M13 6l8 8l-3 1.500l-7-7z" fill=${W}/><path d="M11.500 9c-3 3-7 4-10 3.500c1 7 5 11 10 12c0-3 3-5 5.500-9" stroke=${W} stroke-width="1.700"/><path d="M6 19.500l2.500-2.500" stroke=${W} stroke-width="1.200"/>`)}</div>
              <div class="on">${ic(30, 30, svg`<rect x="10.500" y="10.500" width="9" height="9" stroke=${W} stroke-width="2"/><path d="M15 1v9M15 20v8M1 15h9M20 15h9" stroke=${W} stroke-width="2"/>`)}</div>
              <div>${ic(22, 22, svg`<path d="M2 7.500V2h5.500M2 2l6.500 6.500M14.500 2H20v5.500M20 2l-6.500 6.500M20 14.500V20h-5.500M20 20l-6.500-6.500M7.500 20H2v-5.500M2 20l6.500-6.500" stroke=${W} stroke-width="2.200"/>`)}</div>
              <div>${ic(24, 26, svg`<path d="M8 24C5 21 3 17 1.500 13.500c-.5-2 1.500-2.500 2.500-1l2.500 4L5 6c0-2 2.300-2 2.600-.3L9 11.500L9.300 3c.2-1.800 2.500-1.800 2.600 0L12.200 11l1.600-7.500c.5-1.700 2.700-1.300 2.500.5L15.500 12l2.300-5c.8-1.600 2.800-.8 2.300.9L17.500 16c-.3 4-.5 6-3 8.500c-2 1-5 1-6.500-.5z" stroke=${W} stroke-width="1.400"/>`)}</div>
            </div>
          </div>
          <div class="chart">${ic(1147, 376, this.chart())}</div>
        </div>
        <div class="side">
          <div class="b1">${ic(26, 32, svg`<path d="M2.500 1.500L24 15.500L2.500 30z" fill=${W} stroke=${W} stroke-width="1.500" stroke-linejoin="round"/>`)}</div>
          <div class="two mt5"><div class="b2">${ic(20, 30, svg`<path d="M4 3v24M16 3v24" stroke=${W} stroke-width="6.500" stroke-linecap="round"/>`)}</div>
            <div class="b2">${ic(20, 30, svg`<path d="M3 3L15 15L3 27" stroke=${W} stroke-width="5.500" stroke-linecap="round" stroke-linejoin="round"/>`)}</div></div>
          <div class="two mt61"><div class="b2 dk">${ic(42, 34, svg`<path d="M4 1v24M1 20.500h20M5 20C8-5 14-3 17 15q1 4 3 5M27 8l-1 6" stroke=${W} stroke-width="1.500"/><path d=${gearPath(31.5, 23, 10, 8)} stroke=${W} stroke-width="1.500"/><circle cx="31.500" cy="23" r="4.500" stroke=${W} stroke-width="1.400"/>`)}</div>
            <div class="b2 dk">${ic(38, 30, svg`<rect x="1" y="1" width="36" height="28" rx="2" stroke=${W} stroke-width="1.600"/><path d="M6 4v22M3 23.500h31" stroke=${W}/><path d="M9 22C13-2 17 2 20 13s7 12 11-1" stroke=${W} stroke-width="1.600"/>`)}</div></div>
          <div class="b1 dk mt11">${ic(34, 32, svg`<path d="M1 14.500L17 3L33 14.500" stroke=${W} stroke-width="2.200"/><path d="M22 2h4.500v7L22 5.500z" fill=${W}/><path d="M5 16L17 7.500L29 16V31H21.500V23.500a4.500 4.500 0 0 0-9 0V31H5z" fill=${W}/>`)}</div>
          <div class="b1 dk jog">${ic(52, 76, svg`<path d="M1.500 28L24 2q2-2 4 0L50.500 28L26 14.500zM1.500 48L24 74q2 2 4 0L50.500 48L26 61.500z" fill=${W} stroke=${W} stroke-linejoin="round"/>`)}</div>
          <div class="two last">
            ${this.tile(svg`<path d="M9 9.500A12 12 0 0 1 29 17M27 27A12 12 0 0 1 7 20" stroke=${W} stroke-width="4.200"/><path d="M24 17.500h9.500L29 24zM3 18.500h9L7.500 12z" fill=${W} stroke=${W}/>`)}
            ${this.tile(svg`<g stroke=${W} stroke-width="3">${range(8).map((i) => svg`<path d="M18 6v8.500" transform="rotate(${i * 45} 18 18)"/>`)}</g>`)}
          </div>
        </div>
      </div>
    </div></div>`;
  }
}

/* ---------- taskbar ---------- */

@customElement("task-bar")
class TaskBar extends LitElement {
  static styles = [base, css`
    .bar { width: 1920px; height: 48px; background: linear-gradient(90deg, #202020, #2b2b2b 30%, #2b2b2b 80%, #222); border-top: 1px solid #484848; display: grid; grid-template-columns: 607px 1fr 240px; color: #fff; line-height: 16px; }
    .wx { display: flex; gap: 7px; padding: 6px 0 0 19px; letter-spacing: -0.3px; }
    .wx span { color: #b8b8b8; }
    .mid { display: flex; align-items: center; }
    .start { margin: 0 14px 0 10px; }
    .search { width: 218px; height: 30px; border-radius: 15px; background: #f3f3f3; color: #555; display: flex; align-items: center; padding: 0 6px 0 11px; margin-right: 3px; }
    .search span { flex: 1; padding-left: 10px; font-size: 12.5px; }
    .app { width: 40px; height: 40px; margin: 0 2px; border-radius: 4px; display: flex; flex-direction: column; align-items: center; justify-content: flex-end; gap: 5px; }
    .app.on { background: #393939; box-shadow: inset 0 0 0 1px #444; }
    .pip { width: 6px; height: 3px; border-radius: 2px; background: #999; margin-bottom: 1px; }
    .none { background: none; } .on .pip { width: 16px; background: #4cc2ff; }
    .tray { display: flex; align-items: center; justify-content: flex-end; padding: 0 21px 1px 0; }
    .clock { text-align: right; margin: 0 7px 0 30px; width: 42px; display: flex; flex-direction: column; align-items: flex-end; white-space: nowrap; letter-spacing: -0.4px; }
    .up { margin-right: 18px; } .net { margin-right: 8px; }
  `];
  app(art: unknown, box: string, cls = "") {
    return html`<div class="app ${cls}">${ic(24, 24, art, box)}<div class="pip ${cls === "idle" ? "none" : ""}"></div></div>`;
  }
  render() {
    return html`<div class="bar">
      <div class="wx">${ic(24, 28, svg`<path d="M2 16c7 3 15-1 17-7c6 6 2 16-6 16c-5 0-9-3-11-9z" fill="#f59b23"/><path d="M3 13a3.500 3.500 0 0 1 1-6c2-5 7-4 8 0c4 0 4 6 0 6z" fill="#a9c8f5"/><circle cx="19" cy="6" r="8" fill="#c42b1c"/><text x="19" y="10" font-size="11" fill="#fff" text-anchor="middle" font-family="Open Sans, sans-serif">1</text>`)}<div>70°F<br /><span>Mostly clear</span></div></div>
      <div class="mid">
        <div class="start">${ic(23, 23, svg`<path d="M0 0h11v11H0zM12 0h11v11H12zM0 12h11v11H0zM12 12h11v11H12z" fill="#4cc2f8"/>`)}</div>
        <div class="search">${ic(15, 15, svg`<circle cx="6.500" cy="6.500" r="5.300" stroke="#222" stroke-width="1.600"/><path d="M10.500 10.500l4 4" stroke="#222" stroke-width="1.800"/>`)}<span>Search</span>
          ${ic(42, 24, svg`<path d="M10 16l8-9l5 4l4-4l9 9v2H8z" fill="#b98f80"/><path d="M17 8l2-2l3 4zM26 8l2-1l2 3z" fill="#f3e8e4"/><ellipse cx="23" cy="19" rx="12" ry="3" fill="#43b6d8"/><path d="M0 21c6-3 12-2 20 2H0zM24 23c4-2 12-4 18-1v1z" fill="#4c8a3a"/><path d="M4 3l3 6H5l3 6H1l3-6H2zM10 0l3 8h-1l3 9H7l2-9H8zM33 5l3 6h-1l3 7h-9l3-7h-1zM39 10l3 9h-6z" fill="#1f6b4a"/><path d="M5 15v5M10.500 17v5M33.500 18v4M39 19v3" stroke="#7a4a28" stroke-width="1.500"/>`)}</div>
        ${this.app(svg`<rect x="0" y="7" width="16" height="15" fill="#7a7a7a"/><rect x="7" y="1" width="17" height="15" fill="#f2f2f2"/><rect x="7" y="7" width="9" height="9" fill="#b9b9b9"/>`, "0 0 24 24", "idle")}
        ${this.app(svg`${copilotArt}<path d="M1 12h8l-1.500 5H4c-2.500 0-3.800-2-3-5z" fill="#f0b83c"/><path d="M14 15l2-8h4c2 0 3 1 3.500 3z" fill="#b46cf0"/><path d="M6 18h5l1 5H9c-2 0-3-2-3-5z" fill="#f5784a"/>`, "0 0 24 24", "idle")}
        ${this.app(edgeArt, "0 0 48 48")}
        ${this.app(svg`<circle cx="13" cy="5" r="3.500" fill="#7b83eb"/><circle cx="20" cy="6" r="2.600" fill="#5059c9"/><path d="M8 9h11v8c0 8-11 8-11 0z" fill="#7b83eb"/><path d="M19 9h5v6c0 4-3 5-5 4z" fill="#5059c9"/><rect x="0" y="6" width="13" height="13" rx="1.500" fill="#4b53bc"/><path d="M3 9.500h7M6.500 9.500v7" stroke="#fff" stroke-width="2"/>`, "0 0 24 24", "idle")}
        ${this.app(svg`<path d="M0 3a1.500 1.500 0 0 1 1.500-1.500H9L11 4h11.500A1.500 1.500 0 0 1 24 5.500V10H0z" fill="#f0a30a"/><path d="M0 6.500h24V21a1.500 1.500 0 0 1-1.500 1.500h-21A1.500 1.500 0 0 1 0 21z" fill="#ffd04f"/><path d="M5 22.500V18a2 2 0 0 1 2-2h10a2 2 0 0 1 2 2v4.500z" fill="#1672c4"/>`, "0 0 24 24")}
        ${this.app(svg`<circle cx="12" cy="12" r="8.800" stroke="#43b02a" stroke-width="3.600"/><path d="M12 3.200A8.800 8.800 0 0 0 12 20.800" stroke="#1f4a18" stroke-width="3.600" stroke-dasharray="1.200 2"/>`, "0 0 24 24")}
        ${this.app(svg`<rect x="0" y="2" width="24" height="20" rx="1.500" fill="#444"/><path d="M0 3.500A1.500 1.500 0 0 1 1.500 2h21A1.500 1.500 0 0 1 24 3.500V6H0z" fill="#c8c8c8"/><path d="M3.500 9l4 4l-4 4" stroke="#eee" stroke-width="2.200"/><path d="M10 18h8" stroke="#eee" stroke-width="2"/>`, "0 0 24 24")}
        ${this.app(newtonArt, "0 0 24 24", "on")}
        ${this.app(arduinoArt, "0 0 44 44")}
        ${this.app(excelArt, "0 0 24 24")}
      </div>
      <div class="tray">
        <div class="up">${ic(12, 8, svg`<path d="M1 7l5-5l5 5" stroke="#fff" stroke-width="1.500"/>`)}</div>
        <div class="net">${ic(16, 16, svg`<path d="M10 1.500H1.500v10H12M4 15h7M5.500 12v3M9.500 12v3" stroke="#fff" stroke-width="1.200"/><rect x="11.500" y=".5" width="4" height="6" rx="1" stroke="#fff"/><path d="M13.500 6.500V15" stroke="#fff"/>`)}</div>
        ${ic(17, 16, svg`<path d="M.7 5.500H3.500L7 2v12L3.500 10.500H.7z" stroke="#fff"/><path d="M9 5.500q2 2.500 0 5M11.500 3.500q3.500 4.500 0 9M14 2q4 6 0 12" stroke="#fff" stroke-width="1.100"/>`)}
        <div class="clock"><span>7:42 PM</span><span>9/25/2024</span></div>
        ${ic(14, 16, svg`<path d="M7 .5a5 5 0 0 1 5 5v4l2 3v.8H0v-.8l2-3v-4a5 5 0 0 1 5-5zM5 14h4a2 2 0 0 1-4 0z" fill="#99ebff"/>`)}
      </div>
    </div>`;
  }
}

@customElement("app-root")
class AppRoot extends LitElement {
  static styles = css`
    :host { display: block; position: relative; width: 1920px; height: 1080px; overflow: hidden; background: #000; }
    browser-window { position: absolute; left: 307px; top: 412px; }
    sheet-window { position: absolute; left: 42px; top: 67px; border-radius: 8px; box-shadow: 0 10px 24px rgba(0,0,0,.25); }
    newton-window { position: absolute; left: 214px; top: 134px; }
    task-bar { position: absolute; left: 0; top: 1032px; }
  `;
  render() {
    return html`<desk-icons></desk-icons><browser-window></browser-window><sheet-window></sheet-window><newton-window></newton-window><task-bar></task-bar>`;
  }
}
